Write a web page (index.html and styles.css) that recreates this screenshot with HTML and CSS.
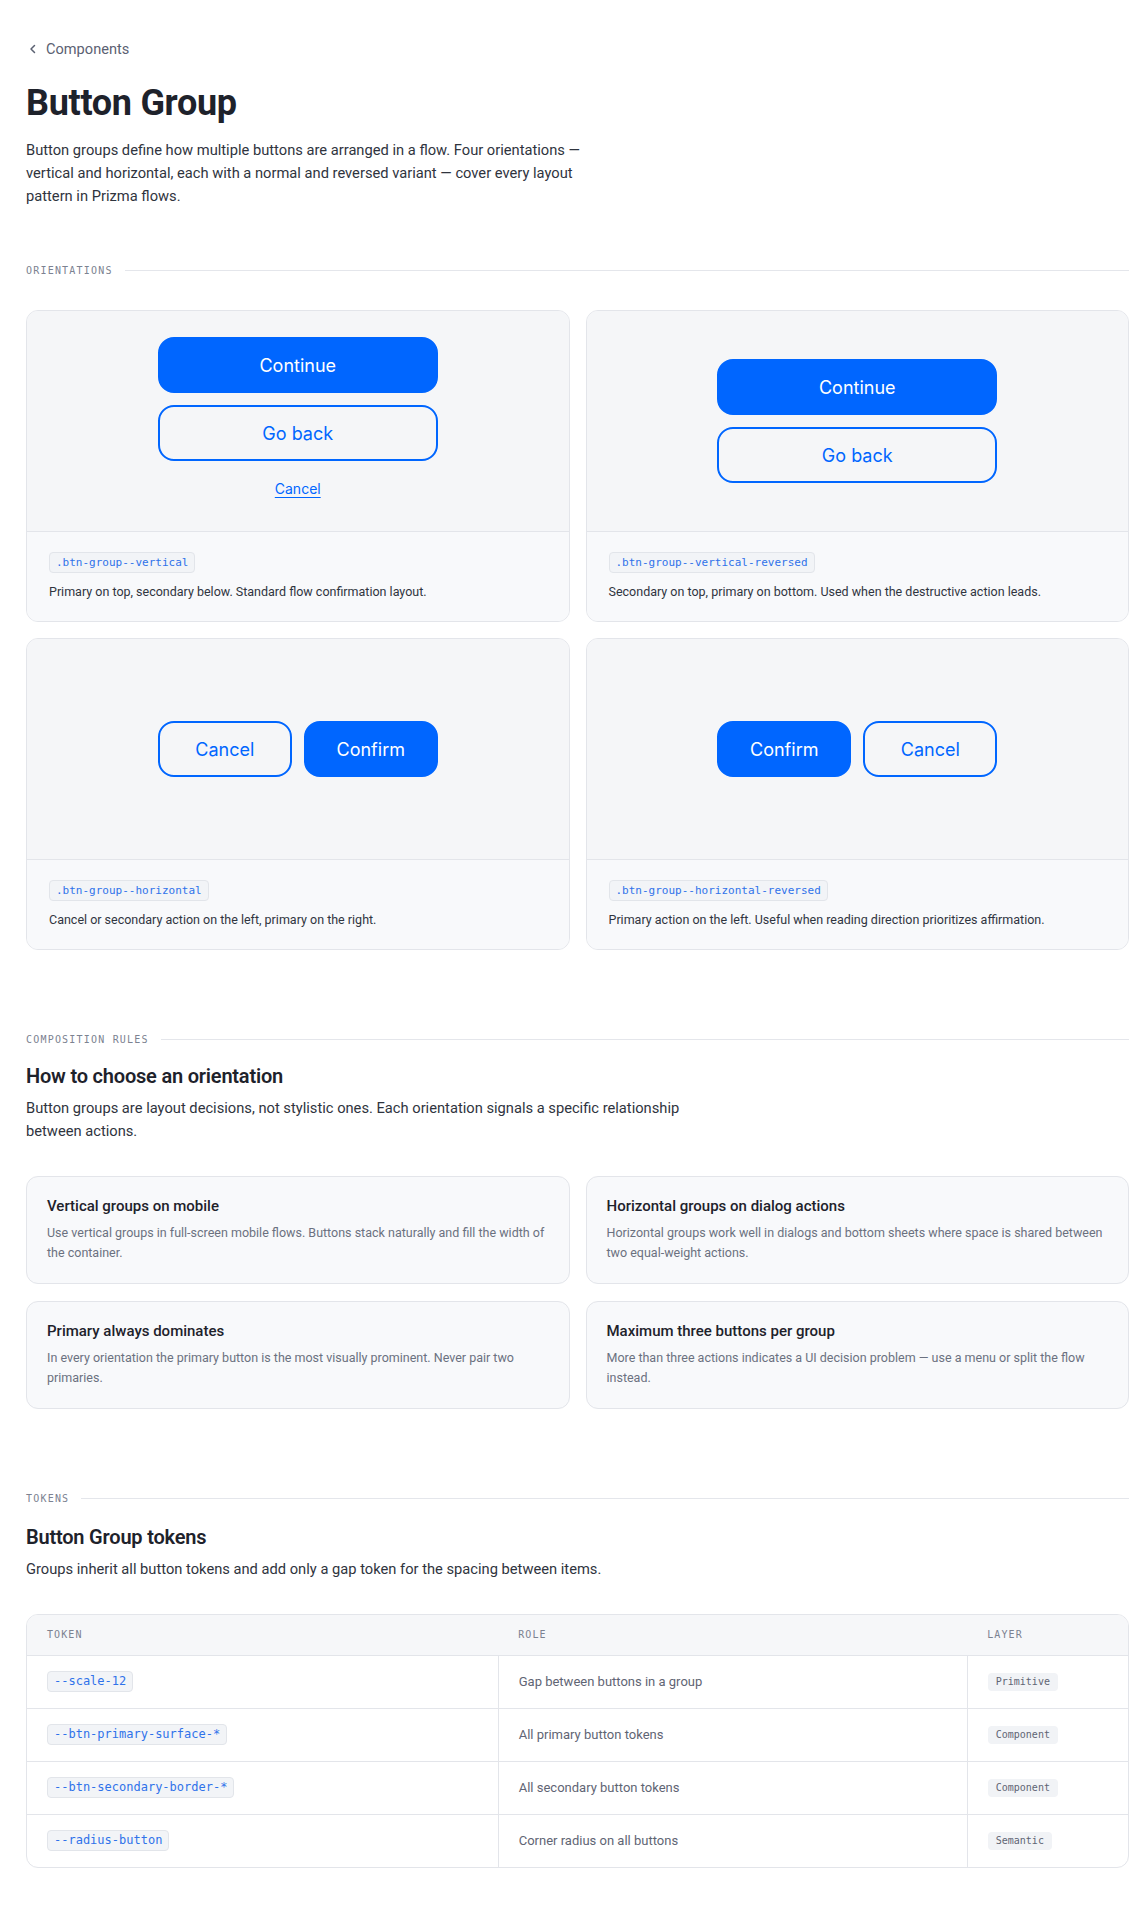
FILE: index.html
```html
<!DOCTYPE html>
<html lang="en">
<head>
<meta charset="utf-8">
<title>Button Group</title>
<link rel="stylesheet" href="styles.css">
</head>
<body>
<main class="page">
  <a class="back" href="#">
    <svg class="back-icon" width="14" height="14" viewBox="0 0 14 14" aria-hidden="true"><path d="M8.5 3.5 L5 7 L8.5 10.5" fill="none" stroke="currentColor" stroke-width="1.5" stroke-linecap="round" stroke-linejoin="round"/></svg>
    <span>Components</span>
  </a>
  <h1 class="title">Button Group</h1>
  <p class="intro">Button groups define how multiple buttons are arranged in a flow. Four orientations — vertical and horizontal, each with a normal and reversed variant — cover every layout pattern in Prizma flows.</p>

  <section class="section section-first">
    <div class="section-label"><span>ORIENTATIONS</span></div>
    <div class="orient-grid">
      <div class="orient-card">
        <div class="preview">
          <div class="group group-vertical">
            <button class="btn btn-primary">Continue</button>
            <button class="btn btn-secondary">Go back</button>
            <a class="text-link" href="#">Cancel</a>
          </div>
        </div>
        <div class="card-foot">
          <code class="chip">.btn-group--vertical</code>
          <p class="foot-desc">Primary on top, secondary below. Standard flow confirmation layout.</p>
        </div>
      </div>
      <div class="orient-card">
        <div class="preview">
          <div class="group group-vertical">
            <button class="btn btn-primary">Continue</button>
            <button class="btn btn-secondary">Go back</button>
          </div>
        </div>
        <div class="card-foot">
          <code class="chip">.btn-group--vertical-reversed</code>
          <p class="foot-desc">Secondary on top, primary on bottom. Used when the destructive action leads.</p>
        </div>
      </div>
      <div class="orient-card">
        <div class="preview">
          <div class="group group-horizontal">
            <button class="btn btn-secondary">Cancel</button>
            <button class="btn btn-primary">Confirm</button>
          </div>
        </div>
        <div class="card-foot">
          <code class="chip">.btn-group--horizontal</code>
          <p class="foot-desc">Cancel or secondary action on the left, primary on the right.</p>
        </div>
      </div>
      <div class="orient-card">
        <div class="preview">
          <div class="group group-horizontal">
            <button class="btn btn-primary">Confirm</button>
            <button class="btn btn-secondary">Cancel</button>
          </div>
        </div>
        <div class="card-foot">
          <code class="chip">.btn-group--horizontal-reversed</code>
          <p class="foot-desc">Primary action on the left. Useful when reading direction prioritizes affirmation.</p>
        </div>
      </div>
    </div>
  </section>

  <section class="section">
    <div class="section-label"><span>COMPOSITION RULES</span></div>
    <h2 class="section-title">How to choose an orientation</h2>
    <p class="section-text section-text-wide">Button groups are layout decisions, not stylistic ones. Each orientation signals a specific relationship between actions.</p>
    <div class="rules-grid">
      <div class="rule-card">
        <h3 class="rule-title">Vertical groups on mobile</h3>
        <p class="rule-desc">Use vertical groups in full-screen mobile flows. Buttons stack naturally and fill the width of the container.</p>
      </div>
      <div class="rule-card">
        <h3 class="rule-title">Horizontal groups on dialog actions</h3>
        <p class="rule-desc">Horizontal groups work well in dialogs and bottom sheets where space is shared between two equal-weight actions.</p>
      </div>
      <div class="rule-card">
        <h3 class="rule-title">Primary always dominates</h3>
        <p class="rule-desc">In every orientation the primary button is the most visually prominent. Never pair two primaries.</p>
      </div>
      <div class="rule-card">
        <h3 class="rule-title">Maximum three buttons per group</h3>
        <p class="rule-desc">More than three actions indicates a UI decision problem — use a menu or split the flow instead.</p>
      </div>
    </div>
  </section>

  <section class="section">
    <div class="section-label"><span>TOKENS</span></div>
    <h2 class="section-title section-title-tokens">Button Group tokens</h2>
    <p class="section-text">Groups inherit all button tokens and add only a gap token for the spacing between items.</p>
    <div class="table-wrap">
      <table class="tokens">
        <colgroup>
          <col class="col-token">
          <col class="col-role">
          <col class="col-layer">
        </colgroup>
        <thead>
          <tr><th>TOKEN</th><th>ROLE</th><th>LAYER</th></tr>
        </thead>
        <tbody>
          <tr>
            <td><code class="chip chip-lg">--scale-12</code></td>
            <td>Gap between buttons in a group</td>
            <td><span class="badge">Primitive</span></td>
          </tr>
          <tr>
            <td><code class="chip chip-lg">--btn-primary-surface-*</code></td>
            <td>All primary button tokens</td>
            <td><span class="badge">Component</span></td>
          </tr>
          <tr>
            <td><code class="chip chip-lg">--btn-secondary-border-*</code></td>
            <td>All secondary button tokens</td>
            <td><span class="badge">Component</span></td>
          </tr>
          <tr>
            <td><code class="chip chip-lg">--radius-button</code></td>
            <td>Corner radius on all buttons</td>
            <td><span class="badge">Semantic</span></td>
          </tr>
        </tbody>
      </table>
    </div>
  </section>
</main>
</body>
</html>
```

FILE: styles.css
```css
* { box-sizing: border-box; }

html, body {
  margin: 0;
  padding: 0;
  background: #ffffff;
}

body {
  font-family: Roboto, "Liberation Sans", Arial, sans-serif;
  color: #2b303a;
  -webkit-font-smoothing: antialiased;
}

.page {
  padding: 39px 11px 40px 26px;
}

/* Back link */
.back {
  display: flex;
  width: fit-content;
  align-items: center;
  gap: 6px;
  height: 20px;
  font-size: 14.6px;
  line-height: 20px;
  color: #5b6172;
  text-decoration: none;
}
.back-icon { color: #5b6172; margin-left: 0; }

.title {
  margin: 22px 0 0;
  font-size: 36px;
  line-height: 44px;
  font-weight: 700;
  letter-spacing: -0.3px;
  color: #1e222b;
}

.intro {
  margin: 14px 0 0;
  max-width: 580px;
  font-size: 14.7px;
  line-height: 23px;
  color: #2f343e;
}

/* Sections */
.section { margin-top: 82px; }
.section-first { margin-top: 55px; }

.section-label {
  display: flex;
  align-items: center;
  gap: 12px;
  height: 14px;
  font-family: "DejaVu Sans Mono", "Liberation Mono", monospace;
  font-size: 10px;
  letter-spacing: 1.2px;
  color: #7c8291;
}
.section-label::after {
  content: "";
  flex: 1;
  height: 1px;
  background: #e4e6eb;
}

.section-title {
  margin: 16px 0 0;
  font-size: 20px;
  line-height: 28px;
  font-weight: 600;
  letter-spacing: -0.2px;
  color: #1e222b;
}
.section-title-tokens { margin-top: 18px; }

.section-text {
  margin: 7px 0 0;
  max-width: 680px;
  font-size: 14.7px;
  line-height: 23px;
  color: #2f343e;
}

/* Orientation cards */
.orient-grid {
  margin-top: 33px;
  display: grid;
  grid-template-columns: 1fr 1fr;
  gap: 16px;
}

.orient-card {
  border: 1px solid #e3e5ea;
  border-radius: 12px;
  overflow: hidden;
  background: #f8f9fb;
}

.preview {
  height: 221px;
  display: flex;
  align-items: center;
  justify-content: center;
  background: #f5f6f8;
  border-bottom: 1px solid #e3e5ea;
}

.group {
  display: flex;
  gap: 12px;
  width: 280px;
}
.group-vertical { flex-direction: column; align-items: stretch; }
.group-horizontal { flex-direction: row; }
.group-horizontal .btn { flex: 1; }

.btn {
  height: 56px;
  border-radius: 16px;
  font-family: Inter, Roboto, sans-serif;
  font-size: 18px;
  font-weight: 400;
  cursor: pointer;
  padding: 0 16px;
}
.btn-primary {
  background: #0066ff;
  color: #ffffff;
  border: 2px solid #0066ff;
}
.btn-secondary {
  background: transparent;
  color: #0066ff;
  border: 2px solid #0066ff;
}

.text-link {
  align-self: center;
  padding: 6px 0;
  font-family: Inter, Roboto, sans-serif;
  font-size: 14px;
  line-height: 20px;
  font-weight: 400;
  color: #0066ff;
  text-decoration: underline;
  text-underline-offset: 3px;
}

.card-foot {
  padding: 19px 22px 19px;
  background: #f8f9fb;
}

.chip {
  display: inline-block;
  padding: 0 6px;
  height: 21px;
  line-height: 19px;
  border: 1px solid #e2e5ea;
  border-radius: 4px;
  background: #f2f4f7;
  font-family: "DejaVu Sans Mono", "Liberation Mono", monospace;
  font-size: 11px;
  color: #2f72ea;
}
.chip-lg {
  font-size: 12px;
}

.foot-desc {
  margin: 9px 0 0;
  font-size: 12.5px;
  line-height: 20px;
  color: #30353f;
}

/* Rules */
.rules-grid {
  margin-top: 33px;
  display: grid;
  grid-template-columns: 1fr 1fr;
  column-gap: 16px;
  row-gap: 17px;
}

.rule-card {
  border: 1px solid #e3e5ea;
  border-radius: 12px;
  background: #f8f9fb;
  padding: 18px 20px 20px;
}

.rule-title {
  margin: 0;
  font-size: 15px;
  line-height: 22px;
  font-weight: 500;
  color: #1e222b;
}

.rule-desc {
  margin: 6px 0 0;
  font-size: 12.5px;
  line-height: 20px;
  color: #6b7180;
}

/* Tokens table */
.table-wrap {
  margin-top: 33px;
  border: 1px solid #e3e5ea;
  border-radius: 12px;
  overflow: hidden;
}

.tokens {
  width: 100%;
  border-collapse: collapse;
  table-layout: fixed;
}
.col-token { width: 42.8%; }
.col-role { width: 42.6%; }
.col-layer { width: 14.6%; }

.tokens th {
  height: 40px;
  padding: 0 20px;
  text-align: left;
  background: #f6f7f9;
  border-bottom: 1px solid #e3e5ea;
  font-family: "DejaVu Sans Mono", "Liberation Mono", monospace;
  font-size: 10px;
  font-weight: 400;
  letter-spacing: 1.1px;
  color: #7c8291;
}

.tokens td {
  height: 53px;
  padding: 0 20px;
  font-size: 13px;
  color: #5f6574;
  border-top: 1px solid #e3e5ea;
}
.tokens tbody tr:first-child td { border-top: none; }
.tokens td + td { border-left: 1px solid #e3e5ea; }

.badge {
  display: inline-block;
  padding: 0 8px;
  height: 18px;
  line-height: 18px;
  border-radius: 4px;
  background: #f1f3f6;
  font-family: "DejaVu Sans Mono", "Liberation Mono", monospace;
  font-size: 10px;
  color: #5f6574;
}
```
